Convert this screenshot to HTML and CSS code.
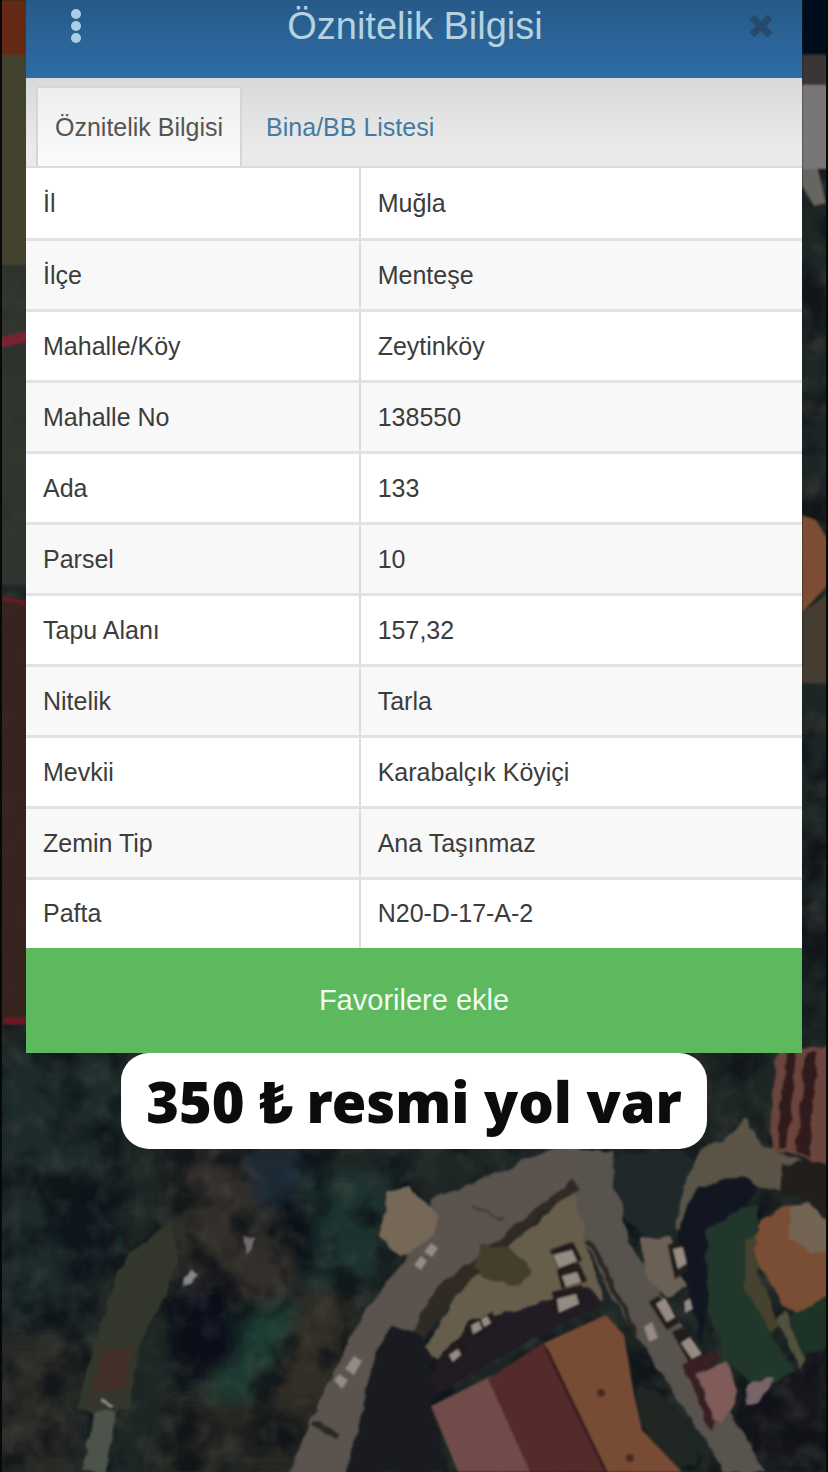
FILE: index.html
```html
<!DOCTYPE html>
<html lang="tr">
<head>
<meta charset="utf-8">
<meta name="viewport" content="width=device-width, initial-scale=1">
<title>Öznitelik Bilgisi</title>
<link rel="stylesheet" href="styles.css">
</head>
<body>
<div class="screen">
  <svg class="map" viewBox="0 0 828 1472" preserveAspectRatio="xMidYMax slice" aria-hidden="true">
    <defs>
      <filter id="soft" x="-5%" y="-5%" width="110%" height="110%" color-interpolation-filters="sRGB">
        <feTurbulence type="fractalNoise" baseFrequency="0.06" numOctaves="2" seed="4" result="n"/>
        <feDisplacementMap in="SourceGraphic" in2="n" scale="9" xChannelSelector="R" yChannelSelector="G"/>
        <feGaussianBlur stdDeviation="1.3"/>
      </filter>
      <filter id="smooth" x="-5%" y="-5%" width="110%" height="110%"><feGaussianBlur stdDeviation="1"/></filter>
      <filter id="haze" x="-20%" y="-20%" width="140%" height="140%"><feGaussianBlur stdDeviation="8"/></filter>
      <filter id="foliage" x="0" y="0" width="100%" height="100%" color-interpolation-filters="sRGB">
        <feTurbulence type="fractalNoise" baseFrequency="0.024" numOctaves="4" seed="8"/>
        <feColorMatrix values="0 0 0 0 0.04  0 0 0 0 0.06  0 0 0 0 0.08  4 0 0 0 -1.8"/>
        <feGaussianBlur stdDeviation="1"/>
      </filter>
      <filter id="grain" x="0" y="0" width="100%" height="100%" color-interpolation-filters="sRGB">
        <feTurbulence type="fractalNoise" baseFrequency="0.045" numOctaves="3" seed="21"/>
        <feColorMatrix values="0 0 0 0 0.34  0 0 0 0 0.36  0 0 0 0 0.32  0 2.4 0 0 -1.1"/>
        <feGaussianBlur stdDeviation="1"/>
      </filter>
    </defs>
    <rect width="828" height="1472" fill="#1e2625"/>
    <g filter="url(#haze)">
      <path d="M0 1050h120v170l-60 80-60 20z" fill="#1e2b29"/>
      <path d="M170 1150h90l40 150-60 60-70-60z" fill="#302d29"/>
      <path d="M240 1150h80l-10 50-50 10z" fill="#1a2c34"/>
      <path d="M300 1170h90v60l-20 60-60 10z" fill="#1d332e"/>
      <path d="M220 1310l70-10 20 60-30 60-70-10z" fill="#1e3a33"/>
      <path d="M45 1200l65-5 10 70-50 25z" fill="#0e141f"/>
      <path d="M170 1290l60-10 10 80-60 20z" fill="#0b111b"/>
      <path d="M270 1200l40-10 10 80-20 10z" fill="#0e141d"/>
      <path d="M310 1290h50l-10 70-40 70-50 42h-40l50-90z" fill="#332e26"/>
      <path d="M0 1340h70l10 132H0z" fill="#2a2928"/>
      <path d="M170 1400h150v72H150z" fill="#282724"/>
      <path d="M620 1150h70l-30 90-30 0z" fill="#1b2629"/>
      <path d="M740 1390l88-60v142h-100z" fill="#12191e"/>
    </g>
    <rect width="828" height="1472" filter="url(#foliage)" opacity=".7"/>
    <rect width="828" height="1472" filter="url(#grain)" opacity=".3"/>

    <!-- strips beside the dialog -->
    <g filter="url(#smooth)">
      <path d="M0 0h28v55H0z" fill="#652c17"/>
      <path d="M0 55h28v210H0z" fill="#42432f"/>
      <path d="M0 265h28v320H0z" fill="#36372f" opacity=".8"/>
      <path d="M0 600h28v425H0z" fill="#3c2520" opacity=".9"/>
      <path d="M0 338l28-7v10l-28 7z" fill="#7a2230"/>
      <path d="M2 596l24 5v4l-24-5zM4 1018h22v6H4z" fill="#6f1828"/>
      <path d="M802-5h30v60h-30z" fill="#04101a"/>
      <path d="M802 55h26v30h-26z" fill="#3b3635"/>
      <path d="M802 85h30v84h-30z" fill="#797678"/>
      <path d="M802 169h16l8 34-12 3-12-20z" fill="#66655f"/>
      <path d="M802 515l14 5 12 20v45l-26 28z" fill="#7c4d33"/>
      <path d="M802 613l26-20v90h-26z" fill="#443d32"/>
    </g>

    <g filter="url(#soft)">
      <!-- field and path on the left -->
      <path d="M170 1222l8 40-15 40-22 40-12 65-20 8-32-8 20-70 22-70 12-15z" fill="#33372b"/>
      <path d="M102 1350l30-4-5 40-36 10z" fill="#44302a"/>
      <path d="M96 1410l20 2-10 60H82z" fill="#4b534b"/>
      <path d="M102 1398l12 8-4 2-8-7z" fill="#91928a"/>
      <path d="M184 1277l8-9 7 4-7 11-9 4z" fill="#85888a"/>
      <path d="M242 1236l13 1-2 13-8 4z" fill="#716a69"/>

      <!-- roads -->
      <path d="M540 1155l35-5h38l15 90 52 85 85 147h-40l-62-98-42-60-46-92-20-20z" fill="#59534e"/>
      <path d="M430 1200l125-52h25l-20 48-65 55-60 58-48 48-34 115h-63l20-50 20-40 35-72 40-50z" fill="#5a534e"/>
      <path d="M390 1190l18-5 30 32-6 22-32 19-22-22z" fill="#766857"/>
      <path d="M575 1190l15 70 15 40-35 15-60 25-65 25-20-15 33-58 45-42z" fill="#675d4b"/>
      <path d="M572 1180l8 7-40 29-62 56-48 55-16 43-18-5 38-76 55-42z" fill="#302a24"/>
      <path d="M430 1372l38-50 60-14 60-22 15 18-80 40-105 60z" fill="#211b24"/>
      <path d="M480 1245l28 2 25 25-15 14-35-9-8-11z" fill="#443e2d"/>
      <path d="M390 1325l33 10 10 45 0 40 15 52h-102l16-60 16-68z" fill="#191b20"/>
      <path d="M473 1206l30 14" stroke="#433934" stroke-width="2"/>
      <path d="M313 1424l27 13M590 1240l46 95" stroke="#282923" stroke-width="5"/>
      <path d="M612 1155l70-5 20 30-20 40-28 22-26-20-14-40z" fill="#1f292a"/>

      <!-- garden on the right -->
      <path d="M700 1150l32-12 55 20-4 32-40-6-35 14-25 28-10 3 14-52z" fill="#5a5447"/>
      <path d="M695 1190l45-15 18 10-10 20-32 20-4 60-10 60-18-70-8-40z" fill="#121621"/>
      <path d="M707 1230l35-22 18-2-10 85 30 60 15 18-35 22-34-30-18-55z" fill="#22372b"/>
      <path d="M747 1240l18-15-5 50 20 50-8 8-28-45z" fill="#45432f"/>
      <path d="M760 1220l30-16 42 20v72l-29 22-20-12-30-55z" fill="#794e34"/>
      <path d="M790 1205l25-7 17 18v34l-19 3-23-15z" fill="#746454"/>
      <path d="M788 1315l44-20v52l-29 8z" fill="#1c3326"/>
      <path d="M785 1310l20 50-5 10-22-50z" fill="#50523f"/>
      <path d="M682 1365l34-16 8 8-28 18 20 48-5 8z" fill="#371f24"/>
      <path d="M698 1374l30-14 10 35-14 28-10-3z" fill="#815b57"/>
      <path d="M748 1384l25-6-14 24-12 3z" fill="#786468"/>
      <path d="M643 1238l26-2 10 28 8 22-20 12-22-23z" fill="#6b6055"/>

      <!-- house beside the caption -->
      <path d="M715 1152l30-34 15 26 40 18-12 30-55-20z" fill="#5c5446"/>
      <path d="M782 1165l46-5v60l-20-20-28-5z" fill="#211e1c"/>
      <path d="M776 1050l56-5v120l-62-15z" fill="#6b453d"/>
      <path d="M786 1055l9-2-8 96-10-3zM805 1052l12 0-8 105-12-4z" fill="#301a1b"/>
      <path d="M636 1385l18 6 38 35 5 40h-25l-34-42z" fill="#202622"/>
    </g>

    <g filter="url(#smooth)">
      <!-- large roofs -->
      <path d="M431 1406l60-30 55 96h-88z" fill="#704b48"/>
      <path d="M488 1379l55-36 62 129h-75z" fill="#552b2b"/>
      <path d="M544 1343l62-28 18 20 10 60 8 35 40 42h-78z" fill="#784b34"/>
      <path d="M546 1348l60 124" stroke="#331b1d" stroke-width="3"/>
      <path d="M597 1393a4 4 0 1 0 8 0 4 4 0 1 0-8 0M626 1458a4 4 0 1 0 8 0 4 4 0 1 0-8 0" fill="#482a23"/>

      <!-- cars and their shadows -->
      <path fill="#211c1c" d="M550 1250l23-8 9 18-22 12zM557 1270l22-7 8 18-25 8zM552 1292l30-7 2 18-28 10zM466 1328l26-16 5 9-24 17zM442 1354l16-11 8 8-17 15zM668 1245l12-4 9 29-14 9zM649 1302l10-6 21 26-13 8zM672 1332l12-5 14 27-9 8z"/>
      <path fill="#958b82" d="M553 1255l19-5 5 11-18 7zM562 1276l15-4 4 10-15 5zM557 1299l19-5 3 10-20 9zM471 1325l8-4 3 8-9 5zM481 1319l6-3 4 7-7 4zM449 1355l9-6 3 6-8 7zM673 1249l10-2 4 16-9 6zM656 1304l9-6 10 19-8 5zM681 1343l9-6 12 17-10 5zM644 1327l8-5 6 16-9 4zM684 1302l6-4 3 11-8 4zM414 1265l7-9 6 5-6 9zM424 1252l7-9 7 5-6 9zM345 1369l9-13 8 5-8 14zM334 1380l5-6 9 6-6 9z"/>
    </g>
    <path d="M0 0h2v1472H0zM826 0h2v1472h-2z" fill="#070909"/>
  </svg>

  <main class="dialog">
    <header class="dialog-header">
      <button class="icon-button" type="button" aria-label="Menü">
        <svg width="12" height="38" viewBox="0 0 12 38"><g fill="#a9cfe0"><circle cx="6" cy="7" r="5"/><circle cx="6" cy="19" r="5"/><circle cx="6" cy="31" r="5"/></g></svg>
      </button>
      <h1 class="dialog-title">Öznitelik Bilgisi</h1>
      <button class="icon-button" type="button" aria-label="Kapat">
        <svg width="26" height="26" viewBox="0 0 26 26"><path d="M4 4l18 18M22 4L4 22" stroke="#27496b" stroke-width="7"/></svg>
      </button>
    </header>
    <nav class="tabs">
      <a class="tab tab-active" href="#oznitelik" aria-current="page">Öznitelik Bilgisi</a>
      <a class="tab" href="#bina">Bina/BB Listesi</a>
    </nav>
    <table class="attributes" id="oznitelik">
      <tbody>
        <tr><th scope="row">İl</th><td>Muğla</td></tr>
        <tr><th scope="row">İlçe</th><td>Menteşe</td></tr>
        <tr><th scope="row">Mahalle/Köy</th><td>Zeytinköy</td></tr>
        <tr><th scope="row">Mahalle No</th><td>138550</td></tr>
        <tr><th scope="row">Ada</th><td>133</td></tr>
        <tr><th scope="row">Parsel</th><td>10</td></tr>
        <tr><th scope="row">Tapu Alanı</th><td>157,32</td></tr>
        <tr><th scope="row">Nitelik</th><td>Tarla</td></tr>
        <tr><th scope="row">Mevkii</th><td>Karabalçık Köyiçi</td></tr>
        <tr><th scope="row">Zemin Tip</th><td>Ana Taşınmaz</td></tr>
        <tr><th scope="row">Pafta</th><td>N20-D-17-A-2</td></tr>
      </tbody>
    </table>
    <button class="favorite" type="button">Favorilere ekle</button>
  </main>
  <p class="caption">350 ₺ resmi yol var</p>
</div>
</body>
</html>
```
FILE: styles.css
```css
* {
  box-sizing: border-box;
}

body {
  margin: 0;
  background: #0b0e0f;
  color: #3c3c3c;
  font-family: "Liberation Sans", Arial, sans-serif;
  font-size: 25px;
  line-height: 29px;
}

.screen {
  position: relative;
  display: flex;
  flex-direction: column;
  align-items: center;
  min-height: 100vh;
  padding: 0 26px;
  overflow: hidden;
}

.map {
  position: absolute;
  inset: 0;
  width: 100%;
  height: 100%;
}

.dialog {
  position: relative;
  width: 100%;
  background: #fff;
}

.dialog-header {
  display: flex;
  align-items: center;
  justify-content: space-between;
  height: 78px;
  padding: 0 28px 26px 44px;
  background: linear-gradient(#275a88, #2d6ca6);
}

.icon-button {
  display: flex;
  padding: 0;
  border: 0;
  background: none;
}

.dialog-title {
  margin: 0;
  color: #b4d3df;
  font-size: 38px;
  font-weight: 400;
  line-height: 44px;
}

.tabs {
  display: flex;
  height: 90px;
  padding: 8px 10px 0;
  border-bottom: 2px solid #dcdcdc;
  background: linear-gradient(#d8dad9, #eaeaea 80%);
}

.tab {
  display: flex;
  align-items: center;
  padding: 2px 24px 0;
  color: #447ba5;
  text-decoration: none;
}

.tab-active {
  padding: 0 17px;
  border: 2px solid #d5d6d6;
  border-bottom: 0;
  background: linear-gradient(#eeeeee, #fbfbfb);
  color: #555;
}

.attributes {
  width: 100%;
  border-collapse: collapse;
  table-layout: fixed;
}

.attributes tr {
  height: 71px;
  border-bottom: 3px solid #e2e2e2;
}

.attributes tr:nth-child(even) {
  background: #f8f8f8;
}

.attributes tr:last-child {
  height: 70px;
  border-bottom: 0;
}

.attributes th,
.attributes td {
  padding: 2px 17px 0;
  font-weight: 400;
  text-align: left;
}

.attributes tr:last-child > * {
  padding-top: 0;
}

.attributes th {
  width: 43%;
  border-right: 2px solid #dcdcdc;
}

.favorite {
  display: block;
  width: 100%;
  padding: 36px 16px;
  border: 0;
  background: #5cb95e;
  color: #f1fbf0;
  font-family: inherit;
  font-size: 29px;
  line-height: 33px;
}

.caption {
  position: relative;
  margin: 0;
  padding: 16px 25px;
  border-radius: 28px;
  background: #fff;
  color: #0c0c0c;
  font-family: "Noto Sans", "Open Sans", sans-serif;
  font-size: 56px;
  font-weight: 900;
  line-height: 64px;
}
```
